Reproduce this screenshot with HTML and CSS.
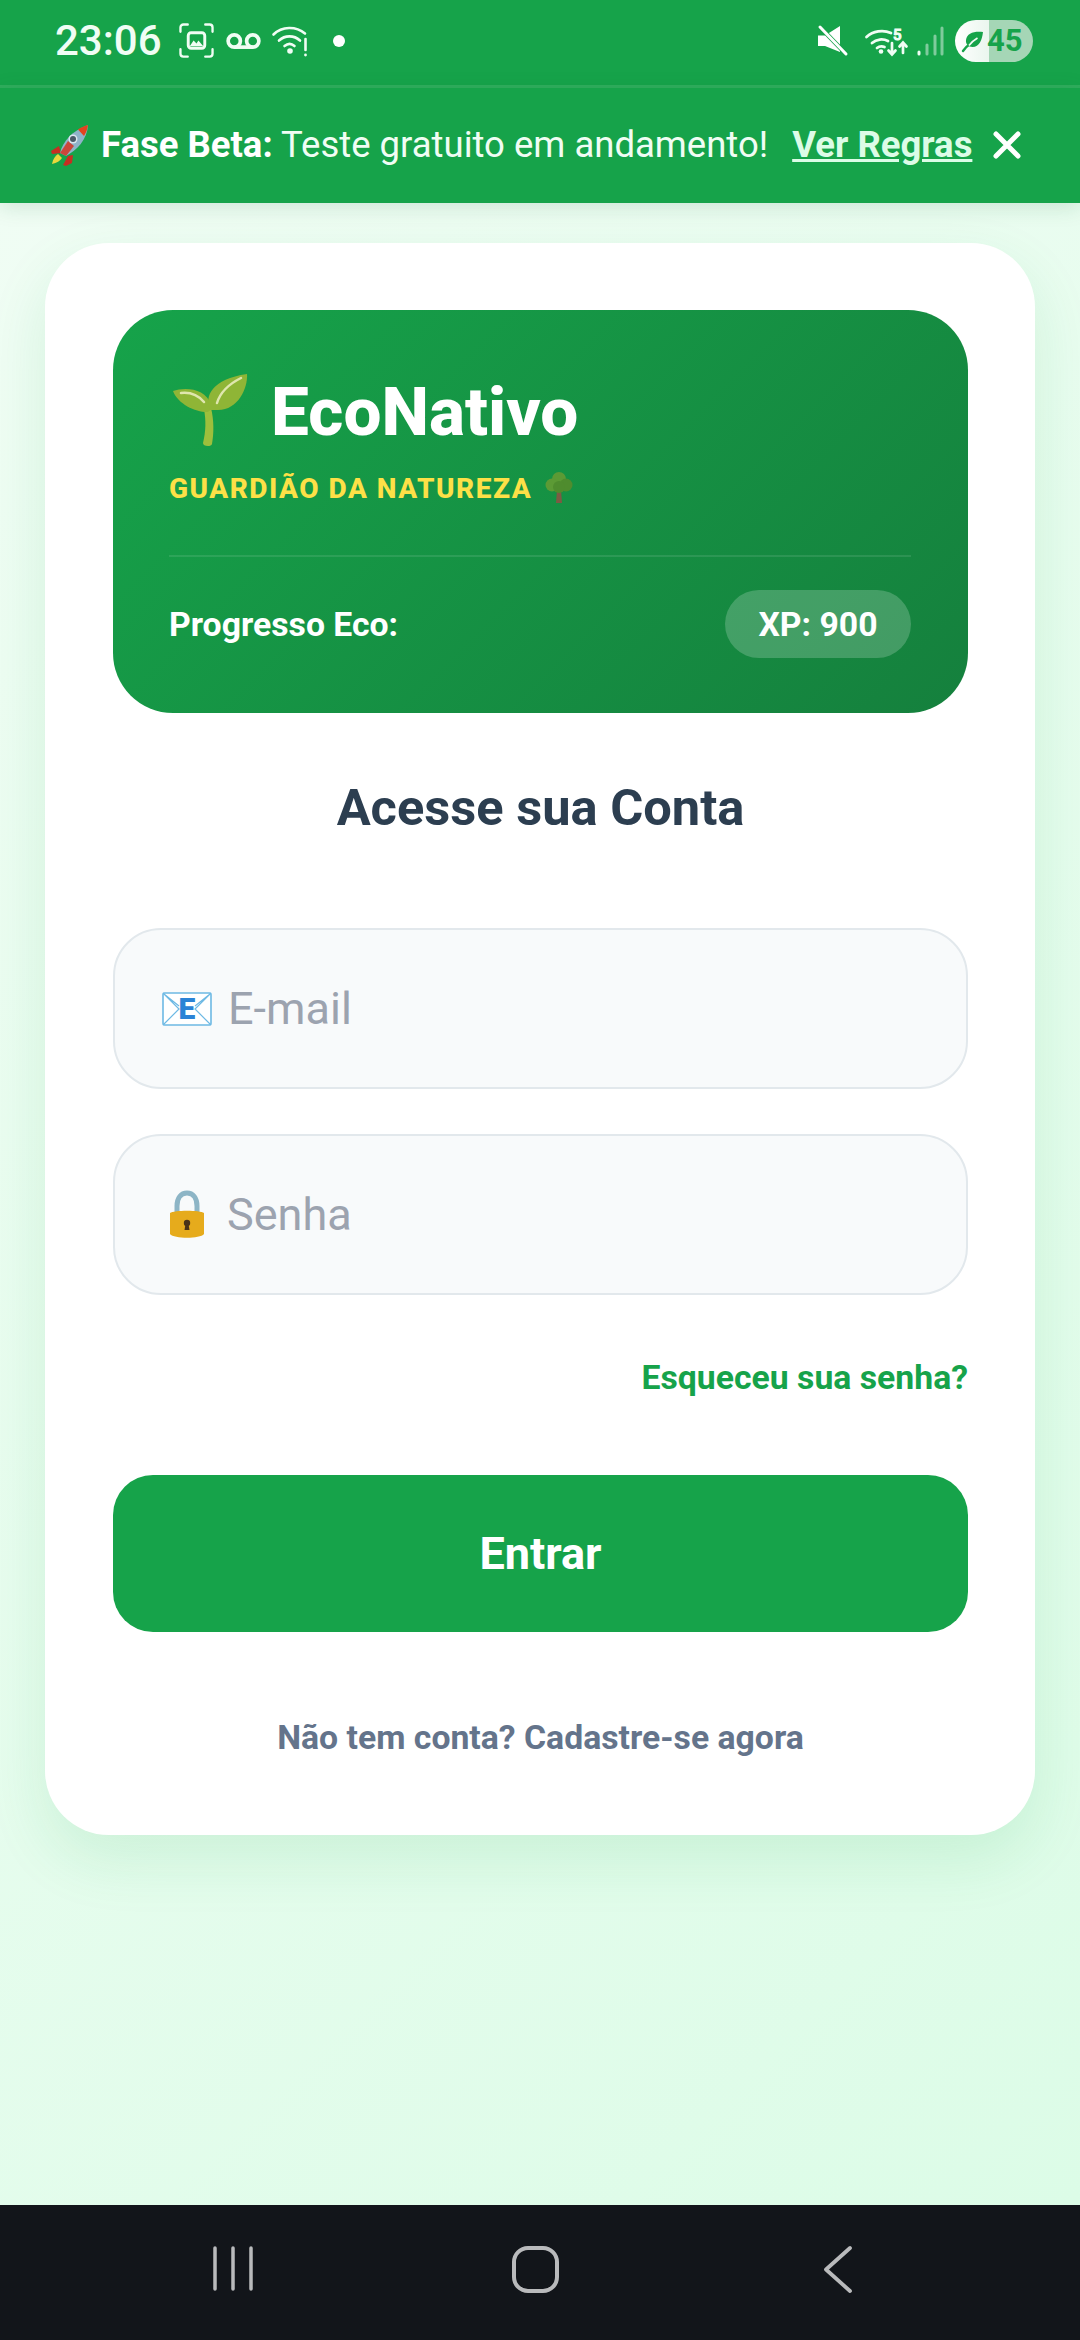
FILE: index.html
```html
<!DOCTYPE html>
<html lang="pt">
<head>
  <meta charset="UTF-8">
  <title>EcoNativo</title>
  <link rel="stylesheet" href="styles.css">
</head>
<body>
  <div class="status">
    <span class="time">23:06</span>
    <svg class="ic-shot" viewBox="0 0 36 36" fill="none" stroke="#f0fdf4" stroke-width="2.400" stroke-linecap="round"><path d="M9 1.500H4.500a3 3 0 0 0-3 3V9M27 1.500h4.500a3 3 0 0 1 3 3V9M9 34.500H4.500a3 3 0 0 1-3-3V27M27 34.500h4.500a3 3 0 0 0 3-3V27"/><rect x="9.500" y="10" width="17" height="16" rx="3" stroke-width="3"/><path d="M11 24l4-6 3 3 2-3 5 6z" fill="#f0fdf4" stroke="none"/></svg>
    <svg class="ic-vm" viewBox="0 0 36 18" fill="none" stroke="#f0fdf4" stroke-width="3.800"><circle cx="8.500" cy="9" r="6.300"/><circle cx="27.500" cy="9" r="6.300"/><path d="M8.500 15.300h19"/></svg>
    <svg class="ic-wifi" viewBox="0 0 38 32" fill="none" stroke="#f0fdf4" stroke-width="2.600" stroke-linecap="round"><path d="M1.500 9.500C10 1 24 1 33 8.500M7 15.500c6-5.500 15-5.500 21 0M12.500 21c3.200-2.700 7-2.700 10 0"/><circle cx="18" cy="26" r="2.800" fill="#f0fdf4" stroke="none"/><path d="M33.500 14v11"/><circle cx="33.500" cy="30" r="1.400" fill="#f0fdf4" stroke="none"/></svg>
    <span class="dot"></span>
    <span class="status-right">
      <svg class="ic-mute" viewBox="0 0 30 30"><path d="M0 9.500h7L22 0v26L7 20H0z" fill="#fff"/><path d="M2 1l26 27" stroke="#16a34a" stroke-width="4.500"/><path d="M2 1l26 27" stroke="#fff" stroke-width="3" stroke-linecap="round"/></svg>
      <svg class="ic-wifi5" viewBox="0 0 43 30" fill="none" stroke="#f0fdf4" stroke-linecap="round"><path d="M1.500 11C8 5 18 3.500 26 7M7 17c4.500-4 11-4.500 16-2M12 22c2.500-2 5-2 7.500-1" stroke-width="2.800"/><circle cx="16" cy="25.500" r="2.300" fill="#f0fdf4" stroke="none"/><path d="M27 17v11M23.500 24.500l3.500 4 3.500-4M38 27V17M34.500 20.500l3.500-4 3.500 4" stroke-width="2.700"/><text x="28" y="13.500" class="wifi-num">5</text></svg>
      <svg class="ic-signal" viewBox="0 0 27 30" fill="none" stroke-width="3" stroke-linecap="round"><path d="M2 26v2" stroke="#f0fdf4"/><path d="M10 19v9M18 10v18M25 2v26" stroke="#7fcb9c"/></svg>
      <span class="battery">
        <svg class="ic-leaf" viewBox="0 0 22 22"><path d="M21 2C12 1 5 3 4 10c-.3 2 .5 4 1.500 5 1 1 3 2 5 2 7 0 9.500-7 10.500-15z" fill="#16a34a"/><path d="M1 21C3 18 5 16 8 14" stroke="#16a34a" stroke-width="2.400" fill="none" stroke-linecap="round"/><path d="M7 15.500C9 13 12 10 15.500 8" stroke="#f2f9f4" stroke-width="1.800" fill="none"/></svg>
        <span class="batt-num">45</span>
      </span>
    </span>
  </div>

  <div class="banner">
    <svg class="ic-rocket" viewBox="0 0 41 42">
      <path d="M11 22L3 27l1 3 9-1z" fill="#c62f22"/>
      <path d="M20 32l-5 9 3 1 6-3 1-8z" fill="#c62f22"/>
      <path d="M10 30c-3 2-5 5-6 10 5-1 8-3 10-6z" fill="#e9d83c"/>
      <path d="M12 29C15 17 24 7 40 1c-1 15-11 25-22 31z" fill="#8fb3c9"/>
      <path d="M30 5.500C33 3.500 36 2 40 1c-.5 4-2 8-4 11z" fill="#e2431e"/>
      <path d="M12 29l6 3 8-10-6-5z" fill="#d33a2a" opacity=".9"/>
      <circle cx="25" cy="15" r="4.500" fill="#dbe7ef"/>
      <circle cx="25" cy="15" r="3" fill="#4a5b68"/>
    </svg>
    <p class="banner-text"><strong>Fase Beta:</strong> Teste gratuito em andamento!</p>
    <a class="rules" href="#">Ver Regras</a>
    <svg class="ic-close" viewBox="0 0 28 28" stroke="#fff" stroke-width="5" stroke-linecap="round"><path d="M3 3l22 22M25 3L3 25"/></svg>
  </div>

  <main class="page">
    <section class="card">
      <div class="hero">
        <div class="brand">
          <svg class="ic-sprout" viewBox="0 0 74 74">
            <path d="M35 72c-3 0-5-1-5-3 3-12 3-23 1-34l7-1c3 12 3 25 1 36-.5 1.500-2 2-4 2z" fill="#9dbf3c"/>
            <path d="M34 38C22 38 5 30 0 17c12-4 33-3 38 14 1 3-1 7-4 7z" fill="#8fb536"/>
            <path d="M37 36c-6-14 2-31 37-36 1 14-9 36-29 36z" fill="#8fb536"/>
            <path d="M8 19c9-1 17 2 23 9M44 29c3-10 12-19 24-25" fill="none" stroke="#dfe6ae" stroke-width="2.500" stroke-linecap="round"/>
          </svg>
          <h1 class="brand-name">EcoNativo</h1>
        </div>
        <div class="rank">
          <span>GUARDIÃO DA NATUREZA</span>
          <svg class="ic-tree" viewBox="0 0 28 32">
            <path d="M12 18h4l1 13h-6z" fill="#7c5b43"/>
            <circle cx="14" cy="7" r="7" fill="#5c9a35"/>
            <circle cx="7" cy="13" r="6.500" fill="#5c9a35"/>
            <circle cx="21" cy="13" r="6.500" fill="#4f8c2e"/>
            <circle cx="14" cy="15" r="6" fill="#4f8c2e"/>
          </svg>
        </div>
        <div class="progress">
          <span>Progresso Eco:</span>
          <span class="xp">XP: 900</span>
        </div>
      </div>

      <h2 class="title">Acesse sua Conta</h2>

      <div class="field">
        <svg class="ic-mail" viewBox="0 0 50 34">
          <rect x="1" y="1" width="48" height="32" rx="1.500" fill="#fff" stroke="#6db9e4" stroke-width="1.600"/>
          <path d="M1 1l16 16L1 33M49 1L33 17l16 16M2 2l15 12M48 2L33 14" fill="none" stroke="#6db9e4" stroke-width="1.200"/>
          <text x="25" y="27" class="mail-e">E</text>
        </svg>
        <span class="ph">E-mail</span>
      </div>

      <div class="field field-pass">
        <svg class="ic-lock" viewBox="0 0 34 47">
          <path d="M7 24V15C7 7 11 2 17 2s10 5 10 13v9" fill="none" stroke="#8db5c6" stroke-width="5"/>
          <path d="M0 22c4-3 30-3 34 0v21c-4 5-30 5-34 0z" fill="#e6ab1c"/>
          <circle cx="17" cy="32" r="3.200" fill="#4a3318"/>
          <path d="M15.500 33h3l1 6h-5z" fill="#4a3318"/>
        </svg>
        <span class="ph">Senha</span>
      </div>

      <a class="forgot" href="#">Esqueceu sua senha?</a>
      <button class="submit">Entrar</button>
      <a class="signup" href="#">Não tem conta? Cadastre-se agora</a>
    </section>
  </main>

  <nav class="navbar">
    <svg class="ic-nav" viewBox="0 0 1080 135" fill="none" stroke="#b9babc" stroke-linecap="round">
      <path d="M215 43v41M233 43v41M251 43v41" stroke-width="3.500"/>
      <rect x="514" y="43" width="43" height="43" rx="14" stroke-width="4"/>
      <path d="M850 43l-24 21.500 24 21.500" stroke-width="3.800" stroke-linejoin="round"/>
    </svg>
  </nav>
</body>
</html>
```

FILE: styles.css
```css
* {
  box-sizing: border-box;
}
html, body {
  margin: 0;
  padding: 0;
}
body {
  width: 1080px;
  height: 2340px;
  display: flex;
  flex-direction: column;
  overflow: hidden;
  font-family: Roboto, "Liberation Sans", sans-serif;
  background: #f0fdf4;
}
svg {
  display: block;
  flex: none;
  overflow: visible;
}

/* status bar */
.status {
  height: 88px;
  padding: 0 47px 4px 55px;
  display: flex;
  align-items: center;
  background: #16a34a;
  border-bottom: 3px solid #2fad5c;
  color: #f0fdf4;
}
.time {
  font-size: 42px;
  font-weight: 500;
  width: 124px;
}
.ic-shot { width: 35px; height: 35px; }
.ic-vm { width: 35px; height: 18px; margin-left: 12px; }
.ic-wifi { width: 38px; height: 32px; margin-left: 11px; }
.dot {
  width: 12px;
  height: 12px;
  border-radius: 50%;
  background: #fff;
  margin-left: 23px;
}
.status-right {
  margin-left: auto;
  display: flex;
  align-items: center;
}
.ic-mute { width: 30px; height: 30px; }
.ic-wifi5 { width: 43px; height: 30px; margin-left: 17px; }
.wifi-num {
  font-size: 15px;
  font-weight: 500;
  fill: #f0fdf4;
}
.ic-signal { width: 27px; height: 30px; margin-left: 9px; }
.battery {
  width: 78px;
  height: 42px;
  margin-left: 11px;
  border-radius: 21px;
  display: flex;
  align-items: center;
  padding-left: 7px;
  background: linear-gradient(90deg, #fff 0, #eaf6ee 34px, #a5d6b6 34px);
}
.ic-leaf { width: 22px; height: 22px; }
.batt-num {
  font-size: 31px;
  font-weight: 700;
  color: #16a34a;
  margin-left: 3px;
}

/* beta banner */
.banner {
  height: 115px;
  padding: 0 59px 2px 48px;
  display: flex;
  align-items: center;
  background: #16a34a;
  color: #f0fdf4;
  font-size: 36.500px;
  box-shadow: 0 4px 20px rgba(22, 101, 52, 0.15);
  position: relative;
}
.ic-rocket { width: 41px; height: 42px; }
.banner-text {
  margin: 0 0 0 12px;
}
.banner-text strong {
  color: #fff;
  font-weight: 700;
}
.rules {
  margin-left: 24px;
  color: #dcfce7;
  font-weight: 700;
  text-decoration: underline;
}
.ic-close { width: 28px; height: 28px; margin-left: auto; }

/* page */
.page {
  flex: 1;
  padding: 40px 45px 0;
  background: linear-gradient(135deg, #f0fdf4, #dcfce7);
}
.card {
  height: 1592px;
  padding: 67px 67px 0 68px;
  background: #fff;
  border-radius: 64px;
  box-shadow: 0 24px 60px rgba(22, 163, 74, 0.12);
}

/* green header */
.hero {
  height: 403px;
  padding: 64px 57px 0 56px;
  border-radius: 60px;
  color: #fff;
  background: linear-gradient(135deg, #16a34a, #15803d);
}
.brand {
  display: flex;
  align-items: center;
  height: 74px;
}
.ic-sprout { width: 74px; height: 74px; margin-left: 4px; }
.brand-name {
  margin: 0 0 0 24px;
  font-size: 67.500px;
  font-weight: 800;
}
.rank {
  display: flex;
  align-items: center;
  margin-top: 24px;
  height: 32px;
  color: #fde047;
  font-size: 28px;
  font-weight: 800;
  letter-spacing: 1.500px;
}
.ic-tree { width: 28px; height: 32px; margin-left: 13px; }
.progress {
  display: flex;
  align-items: center;
  justify-content: space-between;
  margin-top: 51px;
  padding-top: 33px;
  border-top: 2px solid rgba(255, 255, 255, 0.1);
  font-size: 33.750px;
  font-weight: 700;
}
.xp {
  width: 186px;
  height: 68px;
  border-radius: 34px;
  display: flex;
  align-items: center;
  justify-content: center;
  background: rgba(255, 255, 255, 0.2);
}

.title {
  margin: 64px 0 0;
  height: 62px;
  line-height: 62px;
  text-align: center;
  font-size: 50.600px;
  font-weight: 700;
  color: #2c3e50;
}

/* inputs */
.field {
  height: 161px;
  margin-top: 89px;
  padding-left: 47px;
  display: flex;
  align-items: center;
  background: #f8fafb;
  border: 2px solid #e2e8ec;
  border-radius: 48px;
}
.field-pass {
  margin-top: 45px;
  padding-left: 55px;
}
.ic-mail { width: 50px; height: 34px; }
.mail-e {
  font-size: 30px;
  font-weight: 900;
  fill: #2b83d6;
  text-anchor: middle;
}
.ic-lock { width: 34px; height: 47px; }
.ph {
  margin-left: 16px;
  font-size: 45px;
  color: #9ca3af;
}
.field-pass .ph {
  margin-left: 23px;
}

.forgot {
  display: block;
  margin-top: 63px;
  text-align: right;
  font-size: 33.750px;
  font-weight: 700;
  color: #16a34a;
  text-decoration: none;
}
.submit {
  display: block;
  width: 100%;
  height: 157px;
  margin-top: 78px;
  border: 0;
  border-radius: 40px;
  background: #16a34a;
  color: #fff;
  font-family: inherit;
  font-size: 45px;
  font-weight: 700;
}
.signup {
  display: block;
  margin-top: 86px;
  text-align: center;
  font-size: 33.750px;
  font-weight: 700;
  color: #64748b;
  text-decoration: none;
}

/* android nav */
.navbar {
  height: 135px;
  background: #12151a;
}
.ic-nav { width: 1080px; height: 135px; }
```
